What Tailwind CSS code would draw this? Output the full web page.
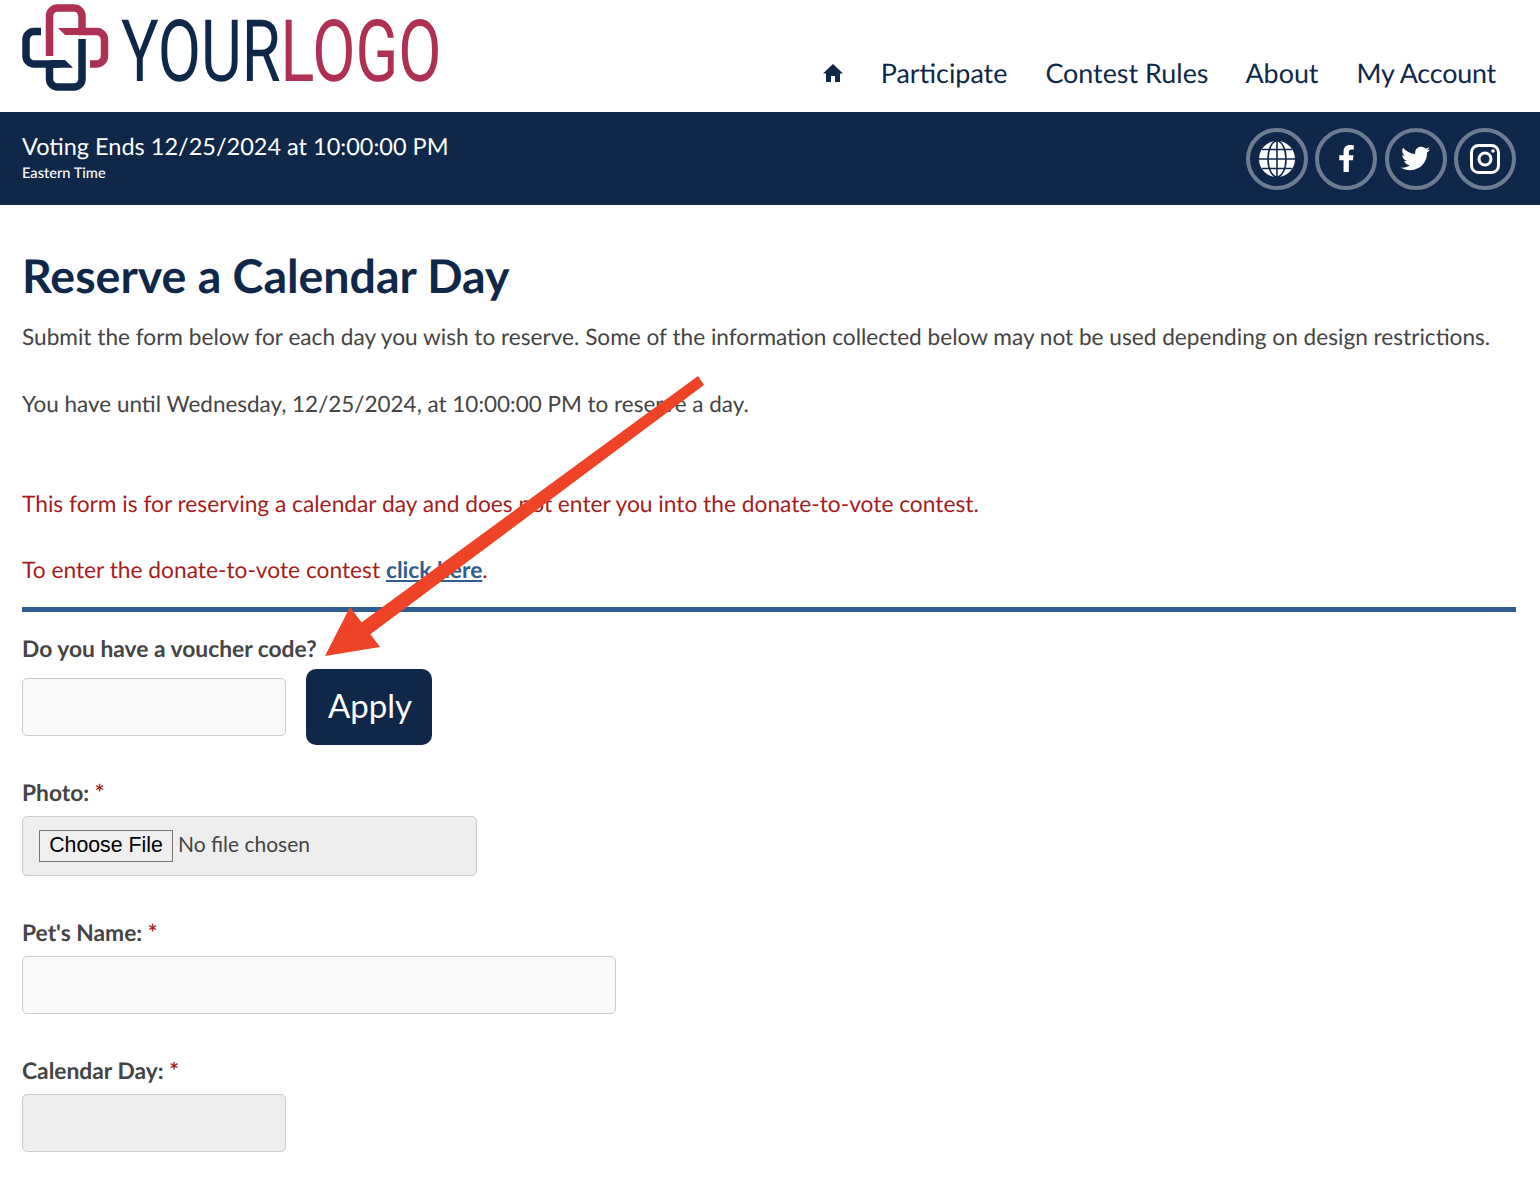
<!DOCTYPE html>
<html lang="en">
<head>
  <meta charset="UTF-8" />
  <meta name="viewport" content="width=device-width, initial-scale=1.0" />
  <title>Reserve a Calendar Day</title>
  <script src="https://cdn.jsdelivr.net/npm/@tailwindcss/browser@4"></script>
</head>
<body class="relative bg-white font-['Lato',sans-serif] text-[#444444] [text-rendering:geometricPrecision]">
  <!-- header -->
  <header class="flex h-[112px] items-start justify-between pl-[22px] pr-[44px]">
    <div class="flex items-start">
      <svg class="h-[96px] w-[100px]" viewBox="22 0 100 96" fill="none" stroke-width="7.5">
        <path d="M49.5 56V16a8 8 0 0 1 8-8H74a8 8 0 0 1 8 8V31.5H96.5a8 8 0 0 1 8 8V56a8 8 0 0 1-8 8H90" stroke="#ae3053" />
        <polygon points="58,28 82,28 82,35 65,35" fill="#ae3053" />
        <path d="M41 31.5H34a8 8 0 0 0-8 8V56a8 8 0 0 0 8 8H60M49.5 64V79a8 8 0 0 0 8 8H74a8 8 0 0 0 8-8V39" stroke="#0f2849" />
        <polygon points="50,60 65,60 73,67.7 50,67.7" fill="#0f2849" />
      </svg>
      <div class="-ml-[1px] mt-[11px] w-[316px] origin-left scale-x-[0.73] whitespace-nowrap font-['Roboto',sans-serif] text-[86px] font-normal leading-[82px] text-[#0f2849]">YOUR<span class="text-[#ae3053]">LOGO</span></div>
    </div>
    <nav class="mt-[55px] flex items-center gap-[38px] text-[26.88px] leading-[36px] text-[#0f2849]">
      <a href="#">
        <svg class="h-[20px] w-[20px]" viewBox="0 0 20 20" fill="#0f2849"><path d="M10 1 L20 10.5 L17 10.5 L17 19 L12 19 L12 13 L8 13 L8 19 L3 19 L3 10.5 L0 10.5 Z" /></svg>
      </a>
      <a href="#">Participate</a>
      <a href="#" class="-mr-[1px]">Contest Rules</a>
      <a href="#">About</a>
      <a href="#" class="tracking-[-0.2px]">My Account</a>
    </nav>
  </header>

  <!-- voting banner -->
  <div class="flex h-[93px] items-center justify-between bg-[#0f2849] pl-[22px] pr-[24px] text-white">
    <div class="-mt-[4px]">
      <div class="text-[23.5px] leading-[34px]">Voting Ends 12/25/2024 at 10:00:00 PM</div>
      <div class="mt-[1px] text-[14.6px] font-medium leading-[18px]">Eastern Time</div>
    </div>
    <div class="flex gap-[7.33px]">
      <a href="#" class="flex h-[62px] w-[62px] items-center justify-center rounded-full border-[4px] border-[#6d7c91]">
        <svg class="h-[36px] w-[36px]" viewBox="0 0 36 36" fill="none">
          <circle cx="18" cy="18" r="18" fill="#fff" />
          <path d="M18 0V36M0 18H36M3 8.5H33M3 27.5H33" stroke="#0f2849" stroke-width="1.6" />
          <ellipse cx="18" cy="18" rx="9" ry="18" stroke="#0f2849" stroke-width="1.6" />
        </svg>
      </a>
      <a href="#" class="flex h-[62px] w-[62px] items-center justify-center rounded-full border-[4px] border-[#6d7c91]">
        <svg class="h-[27px] w-[17px]" viewBox="0 0 320 512" fill="#fff"><path d="M279.14 288l14.22-92.66h-88.91v-60.13c0-25.35 12.42-50.06 52.24-50.06h40.42V6.26S260.43 0 225.36 0c-73.22 0-121.08 44.38-121.08 124.72v70.62H22.89V288h81.39v224h100.17V288z" /></svg>
      </a>
      <a href="#" class="flex h-[62px] w-[62px] items-center justify-center rounded-full border-[4px] border-[#6d7c91]">
        <svg class="h-[29px] w-[29px]" viewBox="0 0 512 512" fill="#fff"><path d="M459.37 151.716c.325 4.548.325 9.097.325 13.645 0 138.72-105.583 298.558-298.558 298.558-59.452 0-114.68-17.219-161.137-47.106 8.447.974 16.568 1.299 25.34 1.299 49.055 0 94.213-16.568 130.274-44.832-46.132-.975-84.792-31.188-98.112-72.772 6.498.974 12.995 1.624 19.818 1.624 9.421 0 18.843-1.3 27.614-3.573-48.081-9.747-84.143-51.98-84.143-102.985v-1.299c13.969 7.797 30.214 12.67 47.431 13.319-28.264-18.843-46.781-51.005-46.781-87.391 0-19.492 5.197-37.36 14.294-52.954 51.655 63.675 129.3 105.258 216.365 109.807-1.624-7.797-2.599-15.918-2.599-24.04 0-57.828 46.782-104.934 104.934-104.934 30.213 0 57.502 12.67 76.67 33.137 23.715-4.548 46.456-13.32 66.599-25.34-7.798 24.366-24.366 44.833-46.132 57.827 21.117-2.273 41.584-8.122 60.426-16.243-14.292 20.791-32.161 39.308-52.628 54.253z" /></svg>
      </a>
      <a href="#" class="flex h-[62px] w-[62px] items-center justify-center rounded-full border-[4px] border-[#6d7c91]">
        <svg class="h-[30px] w-[30px]" viewBox="0 0 30 30" fill="none" stroke="#fff" stroke-width="3">
          <rect x="1.5" y="1.5" width="27" height="27" rx="7" />
          <circle cx="15" cy="15" r="6" />
          <circle cx="23" cy="7" r="1.8" fill="#fff" stroke="none" />
        </svg>
      </a>
    </div>
  </div>

  <!-- page content -->
  <main class="pl-[22px] pr-[24px] pt-[39px] text-[22.7px] leading-[33px]">
    <h1 class="text-[46.5px] font-bold leading-[62px] text-[#0f2849]">Reserve a Calendar Day</h1>
    <p class="mt-[14px] text-[22.63px]">Submit the form below for each day you wish to reserve. Some of the information collected below may not be used depending on design restrictions.</p>
    <p class="mt-[34px] text-[22.47px]">You have until Wednesday, 12/25/2024, at 10:00:00 PM to reserve a day.</p>
    <p class="mt-[67px] text-[22.74px] text-[#a61c1c]">This form is for reserving a calendar day and does not enter you into the donate-to-vote contest.</p>
    <p class="mt-[33px] text-[22.75px] text-[#a61c1c]">To enter the donate-to-vote contest <a href="#" class="font-bold text-[#2f5d8f] underline">click here</a>.</p>

    <hr class="mt-[21px] h-[5px] border-0 bg-[#2f5d8f]" />

    <form>
      <label class="mt-[20px] block text-[22.8px] font-bold">Do you have a voucher code?</label>
      <div class="mt-[4px] flex items-center gap-[20px]">
        <input type="text" class="h-[58px] w-[264px] rounded-[5px] border border-[#cccccc] bg-[#f9f9f9]" />
        <button type="button" class="h-[76px] w-[126px] rounded-[10px] bg-[#0f2849] pb-[3px] pl-[2px] text-[33px] text-white">Apply</button>
      </div>

      <label class="mt-[31px] block text-[22.8px] font-bold">Photo: <span class="text-[#a61c1c]">*</span></label>
      <input type="file" class="mt-[7px] block h-[60px] w-[455px] rounded-[5px] border border-[#cccccc] bg-[#eeeeee] pl-[16px] pt-[11px] text-[21px] leading-[32px] file:mr-[5px] file:h-[32px] file:w-[134px] file:border file:border-[#767676] file:bg-[#efefef] file:pb-[2px] file:font-['Liberation_Sans'] file:text-[21.3px] file:leading-[26px] file:text-black" />

      <label class="mt-[40px] block text-[22.8px] font-bold">Pet's Name: <span class="text-[#a61c1c]">*</span></label>
      <input type="text" class="mt-[7px] block h-[58px] w-[594px] rounded-[5px] border border-[#cccccc] bg-[#f9f9f9]" />

      <label class="mt-[40px] block text-[22.8px] font-bold">Calendar Day: <span class="text-[#a61c1c]">*</span></label>
      <input type="text" disabled class="mt-[7px] block h-[58px] w-[264px] rounded-[5px] border border-[#cccccc] bg-[#eeeeee]" />
    </form>
  </main>

  <!-- annotation arrow drawn over the page -->
  <svg class="pointer-events-none absolute left-0 top-0 h-[1180px] w-[1540px]" viewBox="0 0 1540 1180" fill="#ee4327">
    <polygon points="698,376 704,385 368,636 358,625" />
    <polygon points="325,656 350,607 380,647" />
  </svg>
</body>
</html>
